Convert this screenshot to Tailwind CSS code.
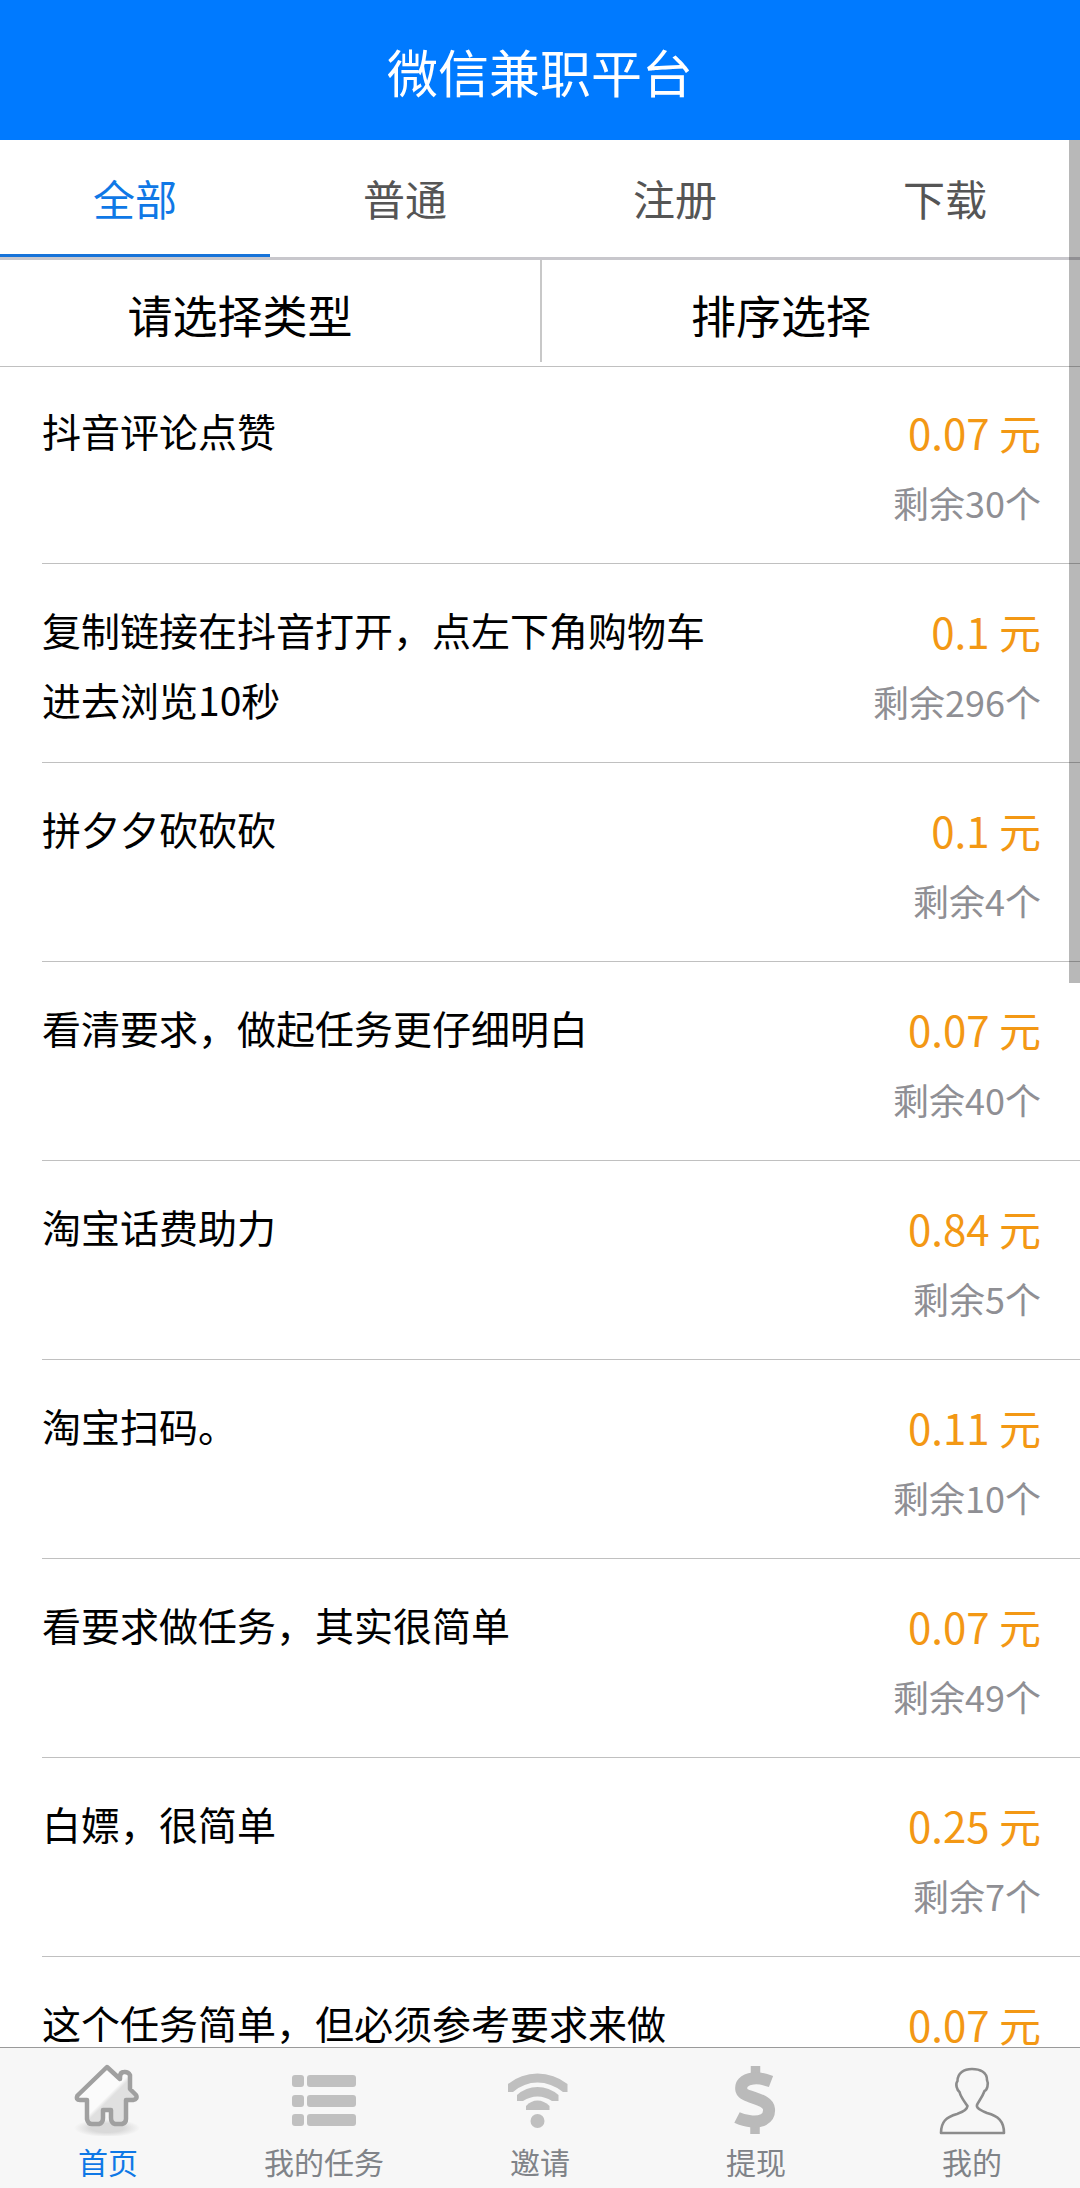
<!DOCTYPE html>
<html lang="zh-CN">
<head>
<meta charset="utf-8">
<meta name="viewport" content="width=device-width, initial-scale=1">
<title>微信兼职平台</title>
<script src="https://cdn.jsdelivr.net/npm/@tailwindcss/browser@4"></script>
</head>
<body class="flex h-screen flex-col overflow-hidden bg-white font-['Noto_Sans_CJK_SC',sans-serif] text-black">
<header class="flex h-[140px] shrink-0 items-center justify-center bg-[#007aff] pt-0.5">
  <h1 class="text-[51px] leading-[72px] text-white">微信兼职平台</h1>
</header>

<main class="relative min-h-0 flex-1 overflow-hidden">
  <div class="grid grid-cols-4 border-b-3 border-[#c8c7cc] text-[42px] text-[#555]">
    <button class="h-[117px] border-b-3 border-[#1673d9] text-[#0f78e6]">全部</button>
    <button class="h-[117px] border-b-3 border-transparent">普通</button>
    <button class="h-[117px] border-b-3 border-transparent">注册</button>
    <button class="h-[117px] border-b-3 border-transparent">下载</button>
  </div>

  <div class="grid grid-cols-2 border-b border-[#c0c0c0] pb-1 text-[45px]">
    <div class="pr-[60px]">
      <select aria-label="类型" class="h-[102px] w-full appearance-none pt-2 text-center [text-align-last:center]"><option>请选择类型</option></select>
    </div>
    <div class="border-l-2 border-[#c8c8c8] pr-[60px]">
      <select aria-label="排序" class="h-[102px] w-full appearance-none pt-2 text-center [text-align-last:center]"><option>排序选择</option></select>
    </div>
  </div>

  <ul class="-mt-0.5 pl-[42px] text-[39px] leading-[70px]">
    <li class="flex h-[199px] items-start justify-between border-b border-[#c0c0c0] pt-[30px] pr-[39px]">
      <p class="w-[670px]">抖音评论点赞</p>
      <div class="pt-0.5 text-right"><p class="text-[42px] text-[#f39814]">0.07 元</p><p class="text-[36px] text-[#8f8f94]">剩余30个</p></div>
    </li>
    <li class="flex h-[199px] items-start justify-between border-b border-[#c0c0c0] pt-[30px] pr-[39px]">
      <p class="w-[670px]">复制链接在抖音打开，点左下角购物车进去浏览10秒</p>
      <div class="pt-0.5 text-right"><p class="text-[42px] text-[#f39814]">0.1 元</p><p class="text-[36px] text-[#8f8f94]">剩余296个</p></div>
    </li>
    <li class="flex h-[199px] items-start justify-between border-b border-[#c0c0c0] pt-[30px] pr-[39px]">
      <p class="w-[670px]">拼夕夕砍砍砍</p>
      <div class="pt-0.5 text-right"><p class="text-[42px] text-[#f39814]">0.1 元</p><p class="text-[36px] text-[#8f8f94]">剩余4个</p></div>
    </li>
    <li class="flex h-[199px] items-start justify-between border-b border-[#c0c0c0] pt-[30px] pr-[39px]">
      <p class="w-[670px]">看清要求，做起任务更仔细明白</p>
      <div class="pt-0.5 text-right"><p class="text-[42px] text-[#f39814]">0.07 元</p><p class="text-[36px] text-[#8f8f94]">剩余40个</p></div>
    </li>
    <li class="flex h-[199px] items-start justify-between border-b border-[#c0c0c0] pt-[30px] pr-[39px]">
      <p class="w-[670px]">淘宝话费助力</p>
      <div class="pt-0.5 text-right"><p class="text-[42px] text-[#f39814]">0.84 元</p><p class="text-[36px] text-[#8f8f94]">剩余5个</p></div>
    </li>
    <li class="flex h-[199px] items-start justify-between border-b border-[#c0c0c0] pt-[30px] pr-[39px]">
      <p class="w-[670px]">淘宝扫码。</p>
      <div class="pt-0.5 text-right"><p class="text-[42px] text-[#f39814]">0.11 元</p><p class="text-[36px] text-[#8f8f94]">剩余10个</p></div>
    </li>
    <li class="flex h-[199px] items-start justify-between border-b border-[#c0c0c0] pt-[30px] pr-[39px]">
      <p class="w-[670px]">看要求做任务，其实很简单</p>
      <div class="pt-0.5 text-right"><p class="text-[42px] text-[#f39814]">0.07 元</p><p class="text-[36px] text-[#8f8f94]">剩余49个</p></div>
    </li>
    <li class="flex h-[199px] items-start justify-between border-b border-[#c0c0c0] pt-[30px] pr-[39px]">
      <p class="w-[670px]">白嫖，很简单</p>
      <div class="pt-0.5 text-right"><p class="text-[42px] text-[#f39814]">0.25 元</p><p class="text-[36px] text-[#8f8f94]">剩余7个</p></div>
    </li>
    <li class="flex h-[199px] items-start justify-between border-b border-[#c0c0c0] pt-[30px] pr-[39px]">
      <p class="w-[670px]">这个任务简单，但必须参考要求来做</p>
      <div class="pt-0.5 text-right"><p class="text-[42px] text-[#f39814]">0.07 元</p></div>
    </li>
  </ul>

  <div class="absolute top-0 right-0 h-[843px] w-[11px] bg-black/28"></div>
</main>

<nav class="grid shrink-0 grid-cols-5 border-t border-[#9a9a9a] bg-[#f7f7f7] pt-4 pb-[6px] text-[30px] leading-[42px] text-[#808388]">
  <a href="#" class="flex flex-col items-center gap-1 text-[#0f78e6]">
    <svg class="size-[72px]" viewBox="0 0 72 72" fill="none">
      <defs>
        <linearGradient id="roof" x1="18" y1="18" x2="52" y2="52" gradientUnits="userSpaceOnUse"><stop offset=".46" stop-color="#fbfbfb"/><stop offset=".54" stop-color="#e0e0e0"/></linearGradient>
        <radialGradient id="shade"><stop offset=".5" stop-color="#d9d9d9"/><stop offset="1" stop-color="#f7f7f7"/></radialGradient>
      </defs>
      <ellipse cx="35" cy="64" rx="33" ry="9" fill="url(#shade)"/>
      <path d="M35 3 L5.500 31.500 Q3.500 36 8 36 L15 36 V55 Q16 60 20 60 H27 Q31 59 31 54 V46 H39 V54 Q39 59 43 60 H50 Q54 59 54 55 V36 H61 Q66 35 64 31 L58 25 V11 Q56 7.500 52 8 Q48 8 48 13 V15 Z" fill="url(#roof)" stroke="#a0a0a0" stroke-width="4.500" stroke-linejoin="round"/>
    </svg>
    首页
  </a>
  <a href="#" class="flex flex-col items-center gap-1">
    <svg class="size-[72px]" viewBox="0 0 72 72" fill="#c0c0c0">
      <rect x="4" y="11" width="12" height="12" rx="3"/><rect x="19" y="11" width="49" height="12" rx="3"/>
      <rect x="4" y="31" width="12" height="12" rx="3"/><rect x="19" y="31" width="49" height="12" rx="3"/>
      <rect x="4" y="50" width="12" height="12" rx="3"/><rect x="19" y="50" width="49" height="12" rx="3"/>
    </svg>
    我的任务
  </a>
  <a href="#" class="flex flex-col items-center gap-1">
    <svg class="size-[72px]" viewBox="0 0 72 72" fill="#bfbfbf">
      <path d="M4 20 Q17 9.500 33.500 9.500 Q50 9.500 63.500 20 V28 H59 Q47 18.500 33.500 18.500 Q20 18.500 9 28 H4 Z"/>
      <path d="M13 31 Q22 23 33.500 23 Q45 23 54.500 31 V37 H48 Q41 32.500 33.500 32.500 Q26 32.500 19 37 H13 Z"/>
      <path d="M22 46 V42 Q27 36.500 33.500 36.500 Q40 36.500 45.500 42 V46 Z"/>
      <circle cx="33.500" cy="57" r="7"/>
    </svg>
    邀请
  </a>
  <a href="#" class="flex flex-col items-center gap-1">
    <svg class="size-[72px]" viewBox="0 0 72 72" fill="none" stroke="#bababa">
      <path d="M35.500 2 V12 M35 60 V70" stroke-width="9.500"/>
      <path d="M51 17.500 C43 14.500 38 13.500 33 14.500 C24 15.500 20 20.500 21.500 26.500 C24 34.500 48 33.500 49 45 C50 56 39 58 32 57.500 C26 57 21 55.500 17 53.500" stroke-width="12"/>
    </svg>
    提现
  </a>
  <a href="#" class="flex flex-col items-center gap-1">
    <svg class="size-[72px]" viewBox="0 0 72 72" fill="none" stroke="#8c8c8c" stroke-width="2.600" stroke-linejoin="round">
      <path d="M5 69 H68 C68 57 62 52 51 49 C44 46 40 44 41 41 C42 38 46 34 48.500 27 C51 26 53 20 51 16 C51 8 44 5 36 5 C28 5 21.500 9 21.500 17 C19 20 21 26 23.500 28 C25 34 29 38 31.500 42 C31 46 27 48 21 50 C10 53 5 58 5 69 Z"/>
    </svg>
    我的
  </a>
</nav>
</body>
</html>
